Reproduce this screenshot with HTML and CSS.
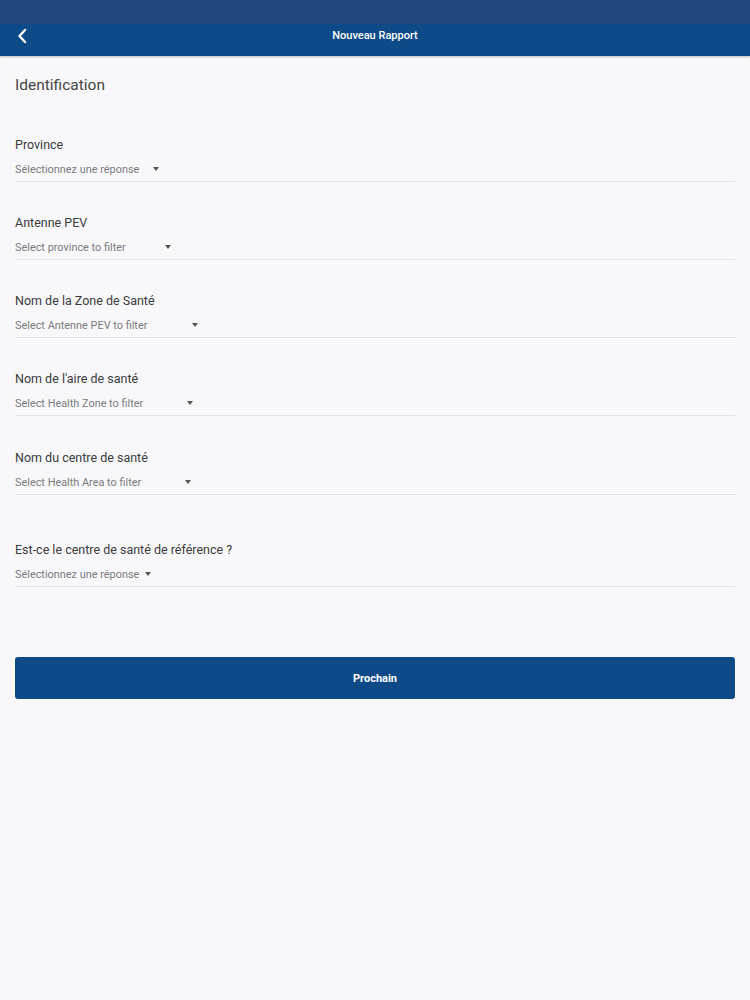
FILE: index.html
```html
<!DOCTYPE html>
<html lang="fr">
<head>
<meta charset="utf-8">
<title>Nouveau Rapport</title>
<link rel="stylesheet" href="styles.css">
</head>
<body>
<header class="appbar">
  <div class="statusbar"></div>
  <div class="navbar">
    <button class="back" aria-label="Retour">
      <svg width="10" height="16" viewBox="0 0 10 16"><path d="M8 2 L2.5 8 L8 14" fill="none" stroke="#fff" stroke-width="2.4" stroke-linecap="round" stroke-linejoin="round"/></svg>
    </button>
    <div class="title">Nouveau Rapport</div>
  </div>
</header>
<main class="content">
  <h1 class="section-title">Identification</h1>

  <div class="field">
    <div class="label">Province</div>
    <div class="select"><span class="sel-text sel-province">Sélectionnez une réponse</span><span class="caret"></span></div>
  </div>

  <div class="field">
    <div class="label">Antenne PEV</div>
    <div class="select"><span class="sel-text sel-antenne">Select province to filter</span><span class="caret"></span></div>
  </div>

  <div class="field">
    <div class="label">Nom de la Zone de Santé</div>
    <div class="select"><span class="sel-text sel-zone">Select Antenne PEV to filter</span><span class="caret"></span></div>
  </div>

  <div class="field">
    <div class="label">Nom de l'aire de santé</div>
    <div class="select"><span class="sel-text sel-aire">Select Health Zone to filter</span><span class="caret"></span></div>
  </div>

  <div class="field field-fifth">
    <div class="label">Nom du centre de santé</div>
    <div class="select"><span class="sel-text sel-centre">Select Health Area to filter</span><span class="caret"></span></div>
  </div>

  <div class="field field-last">
    <div class="label">Est-ce le centre de santé de référence ?</div>
    <div class="select"><span class="sel-text sel-ref">Sélectionnez une réponse</span><span class="caret"></span></div>
  </div>

  <button class="primary">Prochain</button>
</main>
</body>
</html>
```

FILE: styles.css
```css
* { box-sizing: border-box; }
html, body { margin: 0; padding: 0; }
body {
  background: #f8f8fa;
  font-family: Roboto, "Liberation Sans", Arial, sans-serif;
  width: 750px;
  min-height: 1000px;
}
.appbar {
  box-shadow: 0 1px 2px rgba(0,0,0,0.25);
  position: relative;
}
.statusbar {
  height: 24px;
  background: #22477e;
}
.navbar {
  height: 32px;
  background: #0e4a88;
  display: flex;
  align-items: flex-start;
  justify-content: center;
  position: relative;
}
.back {
  position: absolute;
  left: 13px;
  top: 1px;
  width: 18px;
  height: 22px;
  padding: 0;
  border: 0;
  background: transparent;
  display: flex;
  align-items: center;
  justify-content: center;
}
.title {
  color: #fff;
  font-size: 11px;
  font-weight: 500;
  line-height: 14px;
  margin-top: 5px;
}
.content {
  padding: 19px 15px 0 15px;
}
.section-title {
  margin: 0;
  font-size: 15.5px;
  line-height: 20px;
  font-weight: 400;
  color: #444;
}
.field {
  margin-top: 41px;
  border-bottom: 1px solid #e2e2e4;
}
.field + .field { margin-top: 32px; }
.field.field-fifth { margin-top: 33px; }
.field.field-last { margin-top: 46px; }
.label {
  font-size: 12.5px;
  line-height: 18px;
  color: #3b3b3d;
}
.select {
  margin-top: 6px;
  padding-bottom: 3px;
  height: 21px;
  display: flex;
  align-items: center;
  font-size: 10.9px;
  color: #7b7b7f;
}
.sel-text { display: inline-block; }
.sel-province { width: 138px; }
.sel-antenne { width: 150px; }
.sel-zone { width: 177px; }
.sel-aire { width: 172px; }
.sel-centre { width: 170px; }
.sel-ref { width: 130px; }
.caret {
  width: 0;
  height: 0;
  border-left: 3.5px solid transparent;
  border-right: 3.5px solid transparent;
  border-top: 4px solid #555;
}
.primary {
  display: block;
  width: 100%;
  margin-top: 70px;
  height: 42px;
  border: 0;
  border-radius: 3px;
  background: #0f4a88;
  color: #fff;
  font-family: Roboto, "Liberation Sans", Arial, sans-serif;
  font-size: 11px;
  font-weight: 700;
}
```
